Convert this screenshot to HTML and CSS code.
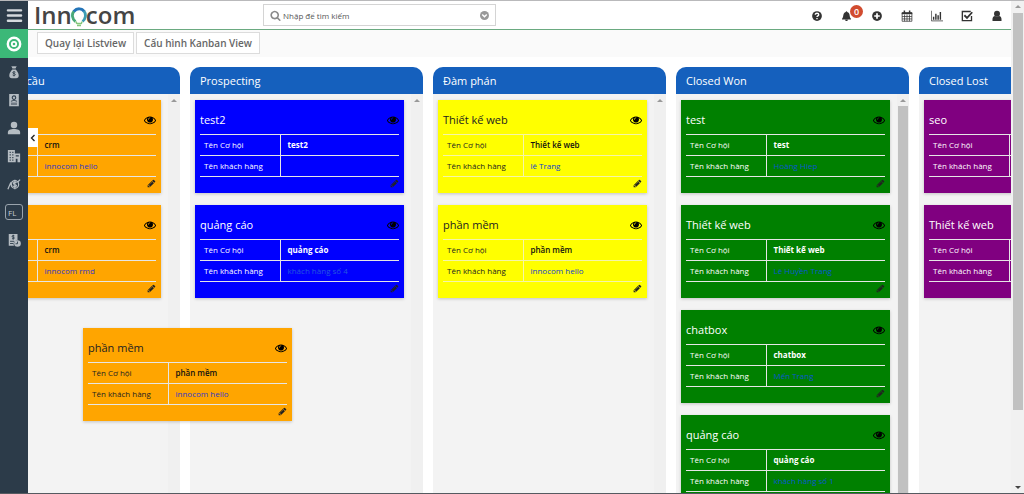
FILE: index.html
```html
<!DOCTYPE html>
<html lang="vi">
<head>
<meta charset="utf-8">
<title>Innocom - Kanban View</title>
<link rel="stylesheet" href="styles.css">
</head>
<body>
<svg class="sprite" aria-hidden="true">
  <symbol id="eye" viewBox="0 0 1792 1792"><path d="M1664 960q-152-236-381-353 61 104 61 225 0 185-131.5 316.5t-316.5 131.5-316.5-131.5-131.5-316.5q0-121 61-225-229 117-381 353 133 205 333.5 326.5t434.5 121.5 434.5-121.5 333.5-326.5zm-720-384q0-20-14-34t-34-14q-125 0-214.5 89.5t-89.5 214.5q0 20 14 34t34 14 34-14 14-34q0-86 61-147t147-61q20 0 34-14t14-34zm848 384q0 34-20 69-140 230-376.5 368.5t-499.5 138.5-499.5-139-376.5-368q-20-35-20-69t20-69q140-229 376.5-368t499.5-139 499.5 139 376.5 368q20 35 20 69z"/></symbol>
  <symbol id="pencil" viewBox="0 0 1792 1792"><path d="M491 1536l91-91-235-235-91 91v107h128v128h107zm523-928q0-22-22-22-10 0-17 7l-542 542q-7 7-7 17 0 22 22 22 10 0 17-7l542-542q7-7 7-17zm-54-192l416 416-832 832h-416v-416zm683 96q0 53-37 90l-166 166-416-416 166-165q36-38 90-38 53 0 91 38l235 234q37 39 37 91z"/></symbol>
  <symbol id="search" viewBox="0 0 1792 1792"><path d="M1216 832q0-185-131.5-316.5t-316.5-131.5-316.5 131.5-131.5 316.5 131.5 316.5 316.5 131.5 316.5-131.5 131.5-316.5zm512 832q0 52-38 90t-90 38q-54 0-90-38l-343-342q-179 124-399 124-143 0-273.5-55.5t-225-150-150-225-55.5-273.5 55.5-273.5 150-225 225-150 273.5-55.5 273.5 55.5 225 150 150 225 55.5 273.5q0 220-124 399l343 343q37 37 37 90z"/></symbol>
</svg>

<div class="app">
  <nav class="sidebar" aria-label="Menu">
    <button class="side menu" aria-label="Menu"><svg viewBox="0 0 16 16"><path d="M1 2.5h14M1 8h14M1 13.5h14" stroke="#d5dade" stroke-width="2.6" stroke-linecap="round"/></svg></button>
    <a class="side active" href="#" aria-label="Cơ hội"><svg viewBox="0 0 16 16" fill="none" stroke="#fff"><circle cx="8" cy="8" r="6.2" stroke-width="2.4"/><circle cx="8" cy="8" r="2.2" stroke-width="1.8"/></svg></a>
    <a class="side" href="#" aria-label="Báo giá"><svg viewBox="0 0 16 16"><path d="M5 1l2 .6L8 1l1 .6L11 1 9.800 4H6.200zM6 5h4c1.500 2 3.400 4 3.400 7 0 2-1 3-3 3H5.600c-2 0-3-1-3-3 0-3 1.900-5 3.400-7z"/><path d="M9.600 8.300C8.800 7.500 6.500 7.600 6.500 8.800c0 1.400 3.100.7 3.100 2.100 0 1.300-2.300 1.400-3.200.5M8 7v6" fill="none" stroke="#2c3b49" stroke-width=".9"/></svg></a>
    <a class="side" href="#" aria-label="Liên hệ"><svg viewBox="0 0 16 16"><path fill-rule="evenodd" d="M2.500 1h11v14h-11zM4.500 11v1h7v-1zM4.500 13v.8h7V13z"/><circle cx="8" cy="5.300" r="2" fill="none" stroke="#2c3b49" stroke-width="1.200"/><path d="M4.500 9.500q3.500-2.500 7 0" fill="none" stroke="#2c3b49"/></svg></a>
    <a class="side" href="#" aria-label="Khách hàng"><svg viewBox="0 0 16 16"><circle cx="8" cy="4.500" r="3.700"/><path d="M1 15v-2c0-3 3-4 7-4s7 1 7 4v2z"/></svg></a>
    <a class="side" href="#" aria-label="Công ty"><svg viewBox="0 0 16 16"><path fill-rule="evenodd" d="M1 1h8v4h6v10h-3v-4h-2v4H1zM3 3v1.500h1.300V3zM6 3v1.500h1.300V3zM3 6v1.500h1.300V6zM6 6v1.500h1.300V6zM3 9v1.500h1.300V9zM6 9v1.500h1.300V9zM3 12v1.500h1.300V12zM6 12v1.500h1.300V12zM10 7v1.500h3.500V7z"/></svg></a>
    <a class="side" href="#" aria-label="Doanh thu"><svg viewBox="0 0 16 16" fill="none" stroke="#b5bcc2" stroke-width="1.400"><path d="M1 14l3-7 2 4M12 6l3-3"/><circle cx="9" cy="8.500" r="4.300"/><path d="M11 6.500C9.500 5.500 7 6 7.200 7.400c.2 1.500 3.600.8 3.600 2.300 0 1.400-2.600 1.500-3.800.5M9 3v11"/></svg></a>
    <a class="side" href="#"><span class="fl">FL</span></a>
    <a class="side" href="#" aria-label="Hóa đơn"><svg viewBox="0 0 16 16"><path d="M2 1h10v7.500A4 4 0 0 0 8 14.500H2z"/><path d="M8.500 3.300C7.500 2.500 5.700 2.900 5.800 3.900c.1 1.200 2.700.6 2.700 1.800 0 1-1.900 1.200-2.800.4M7.100 2v5.500M3.500 9.500H8M3.500 12H7" fill="none" stroke="#2c3b49"/><circle cx="12" cy="12" r="3.800"/><path d="M12 9.800V12.300h-2.200" fill="none" stroke="#2c3b49"/></svg></a>
  </nav>

  <main class="main">
    <header class="header">
      <a class="logo" href="#" aria-label="Innocom"><span>Inn</span><svg viewBox="0 0 16 20" fill="none"><path d="M4.500 14.500C1 12 .5 7 3 4.200" stroke="#48a878" stroke-width="2.800"/><path d="M2.800 4.500C6 .8 11 1.200 13.200 4.500" stroke="#2474b8" stroke-width="3"/><path d="M13 4.200c2.500 3.300 1.500 8-1.500 10.300" stroke="#3d9db5" stroke-width="2.800"/><path d="M5 14.500q.5 2 1 2h4q.7 0 1-2M6 18.500h4" stroke="#83c77b" stroke-width="1.600"/></svg><span>com</span></a>
      <form class="search">
        <svg class="search-icon"><use href="#search"/></svg>
        <input type="text" aria-label="Tìm kiếm" placeholder="Nhập để tìm kiếm">
        <button type="button" aria-label="Tùy chọn tìm kiếm"><svg viewBox="0 0 16 16"><circle cx="8" cy="8" r="8" fill="#999"/><path d="M4 6.300l4 4 4-4" fill="none" stroke="#fff" stroke-width="2.500"/></svg></button>
      </form>
      <div class="tools">
        <button aria-label="Trợ giúp"><svg viewBox="0 0 16 16"><circle cx="8" cy="8" r="6.500"/><path d="M5.700 6.400C5.700 3.600 10.300 3.800 10.300 6.200c0 1.600-2.300 1.600-2.300 3.200M8 10.600v1.800" fill="none" stroke="#fff" stroke-width="1.800"/></svg></button>
        <button class="bell" aria-label="Thông báo"><svg viewBox="0 0 16 16"><path d="M8 1c.8 0 1 .5 1 1.300 5 1.200 2.500 7 5.500 9.700v1h-13v-1C4.500 9.300 2 3.500 7 2.300 7 1.500 7.200 1 8 1zM6 13.500h4c0 2.500-4 2.500-4 0z"/></svg><span class="badge">0</span></button>
        <button aria-label="Thêm"><svg viewBox="0 0 16 16"><circle cx="8" cy="8" r="6.500"/><path d="M8 4.300v7.400M4.300 8h7.400" stroke="#fff" stroke-width="2.300"/></svg></button>
        <button aria-label="Lịch"><svg class="line" viewBox="0 0 16 16"><path d="M1.500 4h13v11h-13zM1.500 8.700h13M1.500 11.900h13M4.750 6v9M8 6v9M11.250 6v9"/><path d="M1 4.300h14" stroke-width="2.600"/><path d="M4.500 .5v4M11.500 .5v4" stroke-width="2"/></svg></button>
        <button aria-label="Báo cáo"><svg class="line" viewBox="0 0 16 16"><path d="M.5 1v13.500H16"/><path d="M3.500 13V9M6.500 13V5M9.500 13V7M12.500 13V2.500" stroke-width="1.900"/></svg></button>
        <button aria-label="Công việc"><svg class="line" viewBox="0 0 16 16"><path d="M14 8v6.200H1.800V2H13" stroke-width="1.800"/><path d="M4.500 7l3.500 3.500L15 3" stroke-width="2.400"/></svg></button>
        <button aria-label="Tài khoản"><svg viewBox="0 0 16 16"><circle cx="8" cy="5" r="4"/><path d="M2 14.500c-.5-4 1-6.500 3.500-6.500q2.500 1.500 5 0C13 8 14.500 10.500 14 14.500z"/></svg></button>
      </div>
    </header>

    <div class="toolbar">
      <button>Quay lại Listview</button>
      <button>Cấu hình Kanban View</button>
    </div>

    <div class="viewport">
      <div class="board" id="board"></div>
    </div>
    <button class="collapse" aria-label="Thu gọn"><svg viewBox="0 0 8 10"><path d="M6 1L2 5l4 4" fill="none" stroke="#222" stroke-width="1.800"/></svg></button>
  </main>

  <div class="page-scroll" aria-hidden="true"><i class="up"></i><i class="thumb"></i><i class="down"></i></div>
  <div class="dragged" id="dragged"></div>
</div>
<script src="board.js"></script>
</body>
</html>
```

FILE: styles.css
```css
* { box-sizing: border-box; }
body {
  margin: 0;
  font-family: "Open Sans", "Noto Sans", sans-serif;
  font-size: 8px;
  color: #333;
  background: #fff;
}
button { border: 0; padding: 0; background: none; font: inherit; color: inherit; cursor: pointer; }
a { text-decoration: none; color: inherit; }
svg { display: block; }
.sprite { position: absolute; width: 0; height: 0; }

.app {
  position: relative;
  display: flex;
  height: 100vh;
  overflow: hidden;
  border-top: 1px solid #b9b9bb;
  border-bottom: 1px solid #555a60;
}

.sidebar { flex: none; width: 28px; background: #2c3b49; }
.side { display: flex; align-items: center; justify-content: center; width: 28px; height: 28px; fill: #b5bcc2; }
.side svg { width: 14px; height: 14px; }
.side.menu svg { width: 17px; height: 15px; }
.side.active { height: 29px; background: #3cb878; }
.side.active svg { width: 16px; height: 16px; }
.fl { width: 18px; height: 16px; padding-left: 2px; border: 1px solid #9aa4ad; border-radius: 3px; line-height: 15px; color: #c5cbd0; }

.main { position: relative; flex: 1; min-width: 0; display: flex; flex-direction: column; }
.header { display: flex; align-items: center; height: 29px; padding: 0 6px; border-bottom: 1px solid #6aaa80; }
.logo { display: flex; align-items: center; width: 229px; font-size: 24px; line-height: 28px; font-weight: 600; color: #454545; }
.logo svg { width: 16px; height: 20px; margin: 4px -1px 0; }

.search { display: flex; align-items: center; width: 233px; height: 22px; padding: 0 6px; border: 1px solid #d4d4d4; }
.search-icon { width: 11px; height: 11px; fill: #8a8a8a; }
.search input { flex: 1; min-width: 0; padding: 0 2px; border: 0; outline: 0; font: inherit; background: none; }
.search input::placeholder { color: #555; opacity: 1; }
.search button svg { width: 9px; height: 9px; }

.tools { display: flex; gap: 18px; margin-left: auto; padding: 2px 2px 0 0; }
.tools button { position: relative; width: 12px; height: 12px; }
.tools svg { width: 12px; height: 12px; fill: #333; }
.tools .line { fill: none; stroke: #333; }
.badge {
  position: absolute; left: 9px; top: -5px;
  display: flex; align-items: center; justify-content: center;
  width: 13px; height: 13px; border-radius: 50%;
  background: #d14b2f; color: #fff;
  font-size: 9px; line-height: 13px; font-weight: 600;
}
.tools .bell { display: block; }
.bell svg { width: 11px; }

.toolbar { display: flex; gap: 2px; height: 27px; padding: 2px 9px; background: #fafafa; }
.toolbar button { height: 22px; padding: 0 7px; border: 1px solid #dcdcdc; background: #fff; font-size: 10px; font-weight: 600; color: #666; }

.viewport { flex: 1; min-height: 0; display: flex; overflow: hidden; padding-top: 10px; }
.board { display: flex; gap: 10px; margin-left: -81px; }
.column { flex: none; width: 233px; display: flex; flex-direction: column; min-height: 0; background: #f3f3f3; border-radius: 10px 10px 0 0; overflow: hidden; }
.column h2 { flex: none; margin: 0; padding: 0 10px; height: 27px; line-height: 27px; font-size: 11px; font-weight: 400; color: #fff; background: #1560bd; }
.lane { flex: 1; min-height: 0; display: flex; justify-content: space-between; overflow: hidden; }
.cards { display: flex; flex-direction: column; gap: 12px; padding: 6px 5px; }
.track { display: flex; flex-direction: column; align-items: center; gap: 4px; width: 12px; padding: 5px 0 0; background: #f0f0f0; }
.track .thumb { flex: 1; width: 10px; }

.up, .down { width: 0; height: 0; border: 3px solid transparent; }
.up { border-top: 0; border-bottom-color: #999; }
.down { border-bottom: 0; border-top-color: #444; }
.thumb { background: #c1c1c1; }

.card { flex: none; width: 209px; height: 93px; padding: 0 5px; color: #fff; box-shadow: 0 1px 3px rgba(0, 0, 0, 0.2); }
.orange { background: #ffa500; }
.yellow { background: #ffff00; }
.blue { background: #0000ff; }
.green { background: #008000; }
.purple { background: #800080; }
.orange, .yellow { color: #222; }
.card-head { display: flex; align-items: center; justify-content: space-between; height: 34px; padding-top: 6px; }
.card h3 { margin: 0; font-size: 11px; line-height: 16px; font-weight: 400; }
.card-head svg { width: 12px; height: 12px; fill: #000; }
.card-foot { display: flex; justify-content: flex-end; padding-top: 2px; }
.card-foot svg { width: 9px; height: 9px; fill: #222; }
.card table { width: 100%; table-layout: fixed; border-collapse: collapse; }
.card th, .card td { height: 21px; border-top: 1px solid #e6e6e6; border-bottom: 1px solid #e6e6e6; line-height: 12px; text-align: left; white-space: nowrap; }
.card th { width: 80px; padding: 0 0 0 4px; border-right: 1px solid #e6e6e6; font-weight: 400; }
.card td { padding: 0 0 0 7px; font-weight: 700; }
.yellow th, .yellow td { border-color: #f5f5a8; }
.orange td, .yellow td { color: #111; font-weight: 600; }
.card td a { font-weight: 400; color: #1040d0; }
.orange td a { color: #3038c8; }
.blue td a { color: #2458e0; }
.green td a { color: #0858d0; }

.collapse { position: absolute; left: 0; top: 127px; width: 10px; height: 19px; background: #fff; }
.collapse svg { width: 6px; height: 8px; margin: 0 auto; }

.page-scroll { flex: none; display: flex; flex-direction: column; align-items: center; width: 13px; padding: 4px 0; background: #f1f1f1; }
.page-scroll .thumb { width: 10px; height: 82%; margin-top: 5px; }
.page-scroll .down { margin-top: auto; }

.dragged { position: absolute; left: 83px; top: 327px; }
```

FILE: board.js
```javascript
const columns = [
  { name: "Xác định nhu cầu", color: "orange", cards: [["crm", "innocom hello"], ["crm", "innocom rmd"]] },
  { name: "Prospecting", color: "blue", cards: [["test2", ""], ["quảng cáo", "khách hàng số 4"]] },
  { name: "Đàm phán", color: "yellow", cards: [["Thiết kế web", "lê Trang"], ["phần mềm", "innocom hello"]] },
  { name: "Closed Won", color: "green", scroll: true, cards: [["test", "Hoàng Hiep"], ["Thiết kế web", "Lê Huyền Trang"], ["chatbox", "Mến Trang"], ["quảng cáo", "khách hàng số 1"]] },
  { name: "Closed Lost", color: "purple", cards: [["seo", ""], ["Thiết kế web", ""]] }
];

const card = (color, [title, customer]) => `
  <article class="card ${color}">
    <div class="card-head"><h3>${title}</h3><button aria-label="Xem"><svg><use href="#eye"/></svg></button></div>
    <table>
      <tr><th scope="row">Tên Cơ hội</th><td>${title}</td></tr>
      <tr><th scope="row">Tên khách hàng</th><td>${customer ? `<a href="#">${customer}</a>` : ""}</td></tr>
    </table>
    <div class="card-foot"><button aria-label="Sửa"><svg><use href="#pencil"/></svg></button></div>
  </article>`;

document.getElementById("board").innerHTML = columns.map(c => `
  <section class="column">
    <h2>${c.name}</h2>
    <div class="lane">
      <div class="cards">${c.cards.map(x => card(c.color, x)).join("")}</div>
      <div class="track"><i class="up"></i>${c.scroll ? '<i class="thumb"></i>' : ""}</div>
    </div>
  </section>`).join("");

document.getElementById("dragged").innerHTML = card("orange", ["phần mềm", "innocom hello"]);
```
